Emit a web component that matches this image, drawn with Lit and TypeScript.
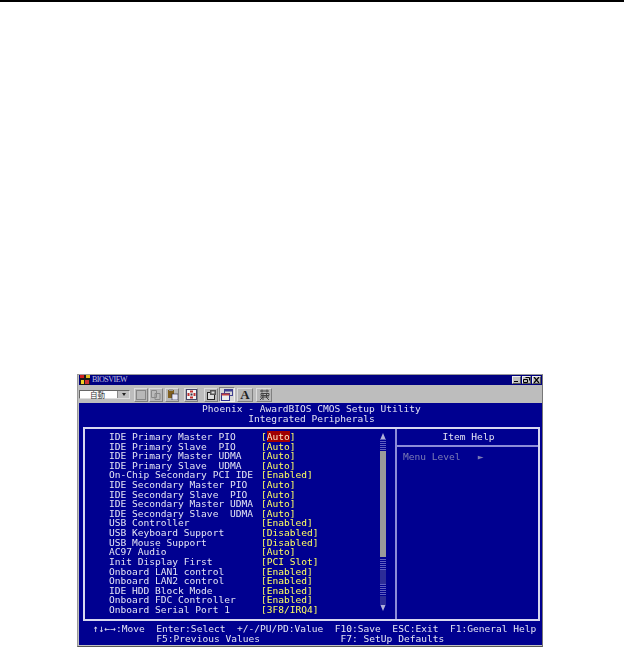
import { LitElement, html, css } from "lit";
import { customElement } from "lit/decorators.js";

const ROWS: [string, string][] = [
  ["IDE Primary Master PIO", "Auto"],
  ["IDE Primary Slave  PIO", "Auto"],
  ["IDE Primary Master UDMA", "Auto"],
  ["IDE Primary Slave  UDMA", "Auto"],
  ["On-Chip Secondary PCI IDE", "Enabled"],
  ["IDE Secondary Master PIO", "Auto"],
  ["IDE Secondary Slave  PIO", "Auto"],
  ["IDE Secondary Master UDMA", "Auto"],
  ["IDE Secondary Slave  UDMA", "Auto"],
  ["USB Controller", "Enabled"],
  ["USB Keyboard Support", "Disabled"],
  ["USB Mouse Support", "Disabled"],
  ["AC97 Audio", "Auto"],
  ["Init Display First", "PCI Slot"],
  ["Onboard LAN1 control", "Enabled"],
  ["Onboard LAN2 control", "Enabled"],
  ["IDE HDD Block Mode", "Enabled"],
  ["Onboard FDC Controller", "Enabled"],
  ["Onboard Serial Port 1", "3F8/IRQ4"],
];

@customElement("app-root")
export class AppRoot extends LitElement {
  static styles = css`
    :host { display: block; width: 624px; height: 648px; background: #fff; overflow: hidden; }
    .rule { height: 2px; background: #000; }
    .win {
      width: 466px; height: 273px; margin: 372px 0 0 77px; box-sizing: border-box;
      background: #c0c0c0; border: 1px solid #9a9a9a; border-bottom-color: #555; border-right-color: #777;
      display: flex; flex-direction: column; padding: 0 0 1px 1px;
    }
    .title {
      height: 10px; background: #000080; display: flex; align-items: center; gap: 2px; padding: 0 1px;
      color: #c4c4e0; font: 8px/10px "Liberation Serif", serif; letter-spacing: -0.5px; flex: none;
    }
    .title .name { flex: 1; }
    .ctl { display: flex; gap: 1px; }
    .ctl div {
      width: 9px; height: 8px; background: #c0c0c0; box-sizing: border-box;
      border: 1px solid; border-color: #eee #555 #555 #eee; display: flex;
    }
    .ctl svg { display: block; }
    .tools { height: 18px; flex: none; display: flex; align-items: center; padding-top: 1px; box-sizing: border-box; background: #bdbdbd; }
    .combo {
      width: 51px; height: 9px; box-sizing: border-box; background: #fff; display: flex; margin-right: 4px;
      border: 1px solid; border-color: #666 #ddd #ddd #666;
      font: 7.5px/8px "Noto Sans CJK TC", sans-serif; color: #333; padding-left: 10px;
    }
    .combo span { flex: 1; }
    .combo i { width: 11px; background: #c0c0c0; border-left: 1px solid #888; display: flex; align-items: center; justify-content: center; }
    .combo i::after { content: ""; border: 2px solid transparent; border-top: 3px solid #222; border-bottom: 0; }
    .btn {
      width: 14px; height: 14px; box-sizing: border-box; background: #b8b8b8; margin-right: 1px;
      border: 1px solid; border-color: #ddd #808080 #808080 #ddd; display: flex; align-items: center; justify-content: center;
    }
    .btn.on { background: #d8d8d8; border-color: #808080 #eee #eee #808080; width: 16px; height: 15px; margin-right: 2px; }
    .btn.wide { width: 16px; }
    .btn svg { display: block; }
    .gap1 { width: 1px; flex: none; }
    .gap { width: 4px; flex: none; }
    .gap2 { width: 5px; flex: none; }
    .gap3 { width: 2px; flex: none; }
    .a { font: bold 13px/12px "Liberation Serif", serif; color: #222; }
    .screen {
      flex: 1; background: #000090; color: #e4e4f4; display: flex; flex-direction: column; min-height: 0;
      font: 9.57px/9.61px "DejaVu Sans Mono", monospace; filter: blur(0.25px);
    }
    .head { text-align: center; padding-top: 1px; height: 24px; box-sizing: border-box; flex: none; padding-left: 2px; }
    .line { height: 9.61px; white-space: pre; }
    .frame {
      height: 194px; flex: none; margin: 0 2px 0 4px; box-sizing: border-box;
      border: 2px solid #d8d8f0; display: flex;
    }
    .pane { width: 312px; flex: none; display: flex; border-right: 2px solid #8c8cd8; box-sizing: border-box; }
    .rows { flex: 1; padding: 3px 0 0 24px; }
    .row { display: grid; grid-template-columns: 152px auto; height: 9.61px; justify-content: start; white-space: pre; }
    .val { color: #ffff60; }
    .val b { font-weight: normal; }
    .val b.sel { background: #a00000; color: #ffe8c0; }
    .scroll { width: 6px; margin: 4px 9px 0 0; display: flex; flex-direction: column; align-items: center; flex: none; }
    .scroll svg { display: block; flex: none; }
    .st { width: 6px; flex: none; background: repeating-linear-gradient(#6060c0 0 1px, #000090 1px 2px); }
    .dk { width: 6px; flex: none; background: #2c2c98; }
    .thumb { width: 6px; height: 106px; flex: none; background: #9a9a9a; margin-bottom: 2px; }
    .help { flex: 1; min-width: 0; }
    .htitle { box-sizing: border-box; padding: 3px 0 0 2px; text-align: center; border-bottom: 2px solid #8c8cd8; height: 18px; }
    .menu { color: #7c7cb4; padding: 5px 0 0 6px; white-space: pre; }
    .foot { padding: 3px 0 0 14px; flex: 1; }
  `;

  render() {
    return html`
      <div class="rule"></div>
      <div class="win">
        <div class="title">
          <svg width="10" height="10" viewBox="0 0 10 10">
            <rect width="10" height="10" fill="#1a1a1a"/>
            <rect x="0" y="0" width="4" height="3" fill="#d02020"/>
            <rect x="6" y="0" width="4" height="3" fill="#e0c020"/>
            <rect x="1" y="5" width="3" height="4" fill="#f0d020"/>
            <rect x="5" y="5" width="4" height="4" fill="#d03030"/>
          </svg>
          <span class="name">BIOSVIEW</span>
          <div class="ctl">
            <div><svg width="7" height="6"><rect x="1" y="4" width="4" height="1" fill="#000"/></svg></div>
            <div><svg width="7" height="6"><path d="M2.5.5h4v3M.5 2.5h4v3h-4z" fill="none" stroke="#000"/></svg></div>
            <div><svg width="7" height="6"><path d="M1 0l5 6M6 0L1 6" stroke="#000" stroke-width="1.2"/></svg></div>
          </div>
        </div>
        <div class="tools">
          <div class="combo"><span>自動</span><i></i></div>
          <div class="btn"><svg width="10" height="10"><rect x=".5" y=".5" width="9" height="9" fill="none" stroke="#555" stroke-dasharray="1 1"/></svg></div>
          <div class="btn"><svg width="10" height="10"><path d="M.5.5h5v7h-5zM4 3.5h5v6H4z" fill="#bbb" stroke="#888"/></svg></div>
          <div class="gap1"></div>
          <div class="btn"><svg width="11" height="11"><rect x="1" y="1" width="6" height="8" fill="#806020"/><rect x="2" y="0" width="4" height="2" fill="#999"/><rect x="5" y="5" width="6" height="6" fill="#e8e8f8" stroke="#224" stroke-width=".6"/></svg></div>
          <div class="gap"></div>
          <div class="btn"><svg width="11" height="11"><rect x=".5" y=".5" width="10" height="10" fill="#f4f4f4" stroke="#446"/><rect x="4" y="1.5" width="3" height="2" fill="#c03030"/><rect x="4" y="7.5" width="3" height="2" fill="#c03030"/><rect x="1.5" y="4" width="2" height="3" fill="#c03030"/><rect x="7.5" y="4" width="2" height="3" fill="#c03030"/><rect x="4.5" y="4.5" width="2" height="2" fill="#334"/></svg></div>
          <div class="gap2"></div>
          <div class="btn"><svg width="11" height="11"><rect x="1.5" y="3.5" width="7" height="7" fill="#ddd" stroke="#222"/><rect x="4" y="1" width="6" height="5" fill="#555"/><rect x="5.5" y="2.5" width="3" height="2" fill="#ddd"/></svg></div>
          <div class="btn on"><svg width="12" height="12"><rect x="3.5" y=".5" width="8" height="6" fill="#d8d8d8" stroke="#404090"/><rect x="3.5" y=".5" width="8" height="2" fill="#404090"/><rect x=".5" y="4.5" width="8" height="7" fill="#eee" stroke="#303090"/><rect x=".5" y="4.5" width="8" height="2" fill="#c04040"/></svg></div>
          <div class="btn wide"><span class="a">A</span></div>
          <div class="gap3"></div>
          <div class="btn wide"><svg width="11" height="11"><path d="M1 2h9M3 .5v3M8 .5v3M2 4.5h8v2H2zM1 8h9M4 4v7M7.5 4v4M7 8l3 3M4 8l-3 3" stroke="#444" fill="none"/></svg></div>
        </div>
        <div class="screen">
          <div class="head"><div class="line">Phoenix - AwardBIOS CMOS Setup Utility</div><div class="line">Integrated Peripherals</div></div>
          <div class="frame">
            <div class="pane">
              <div class="rows">
                ${ROWS.map(([k, v], i) => html`<div class="row"><span>${k}</span><span class="val">[<b class=${i === 0 ? "sel" : ""}>${v}</b>]</span></div>`)}
              </div>
              <div class="scroll">
                <svg width="6" height="6"><path d="M3 0L5.5 6H.5z" fill="#b0b0d8"/></svg>
                <div class="st" style="height:12px"></div>
                <div class="thumb"></div>
                <div class="st" style="height:11px"></div>
                <div class="dk" style="height:14px"></div>
                <div class="st" style="height:12px"></div>
                <div class="dk" style="height:9px"></div>
                <svg width="6" height="6"><path d="M3 6L5.5 0H.5z" fill="#b0b0d8"/></svg>
              </div>
            </div>
            <div class="help">
              <div class="htitle">Item Help</div>
              <div class="menu">Menu Level   ►</div>
            </div>
          </div>
          <div class="foot"><div class="line">↑↓←→:Move  Enter:Select  +/-/PU/PD:Value  F10:Save  ESC:Exit  F1:General Help</div><div class="line">           F5:Previous Values              F7: SetUp Defaults</div></div>
        </div>
      </div>
    `;
  }
}
